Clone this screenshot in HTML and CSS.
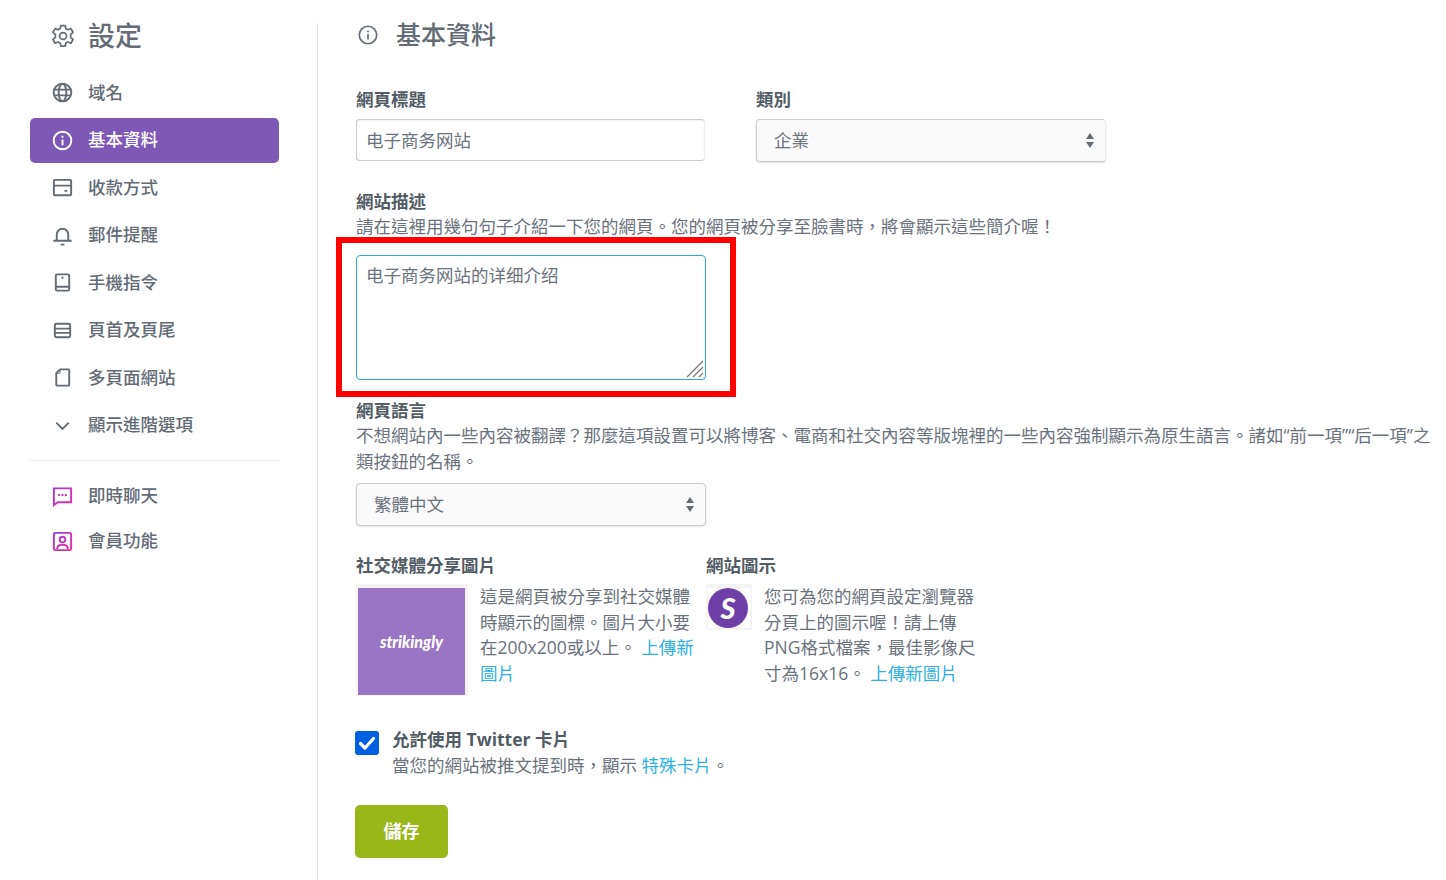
FILE: index.html
```html
<!DOCTYPE html>
<html lang="zh-Hant">
<head>
<meta charset="UTF-8" />
<title>設定</title>
<link rel="stylesheet" href="styles.css">
</head>
<body>
<svg class="defs" width="0" height="0" aria-hidden="true">
  <defs>
    <linearGradient id="pink" gradientUnits="userSpaceOnUse" x1="2" y1="2" x2="22" y2="22">
      <stop offset="0" stop-color="#9c3bd6"/>
      <stop offset="1" stop-color="#ea2f9a"/>
    </linearGradient>
  </defs>
</svg>
<div class="page">
  <aside class="sidebar">
    <h2 class="side-title">
      <svg class="icon" viewBox="1 1 22 22" fill="none" stroke="currentColor" stroke-width="1.600" stroke-linejoin="round"><path d="M10 2.500h4l.6 2.900 1.900.9 2.700-1.100 2 3.400-2.200 1.900v2.800l2.200 1.900-2 3.400-2.700-1.100-1.900.9-.6 2.900h-4l-.6-2.900-1.900-.9-2.700 1.100-2-3.400 2.200-1.900v-2.800L2.800 8.600l2-3.400 2.700 1.100 1.900-.9z"/><circle cx="12" cy="12" r="3.200"/></svg>
      <span>設定</span>
    </h2>
    <nav class="side-nav">
      <a class="side-item">
        <svg class="icon" viewBox="0 0 24 24" fill="none" stroke="currentColor" stroke-width="2"><circle cx="12" cy="12" r="9.200"/><ellipse cx="12" cy="12" rx="4" ry="9.200"/><path d="M3 9h18M3 15h18"/></svg>
        <span>域名</span>
      </a>
      <a class="side-item active">
        <svg class="icon" viewBox="0 0 24 24" fill="none" stroke="currentColor" stroke-width="2"><circle cx="12" cy="12" r="9.200"/><path d="M12 11v6M12 7v2"/></svg>
        <span>基本資料</span>
      </a>
      <a class="side-item">
        <svg class="icon" viewBox="0 0 24 24" fill="none" stroke="currentColor" stroke-width="2"><rect x="3" y="4" width="18" height="16" rx="1"/><path d="M3 10h18M14 15.500h3"/></svg>
        <span>收款方式</span>
      </a>
      <a class="side-item">
        <svg class="icon" viewBox="0 0 24 24" fill="none" stroke="currentColor" stroke-width="2"><path d="M6 17v-6a6 6 0 0 1 12 0v6M2.500 17.500h19M10 21.500h4"/></svg>
        <span>郵件提醒</span>
      </a>
      <a class="side-item">
        <svg class="icon" viewBox="0 0 24 24" fill="none" stroke="currentColor" stroke-width="2"><rect x="5" y="3.500" width="14" height="17" rx="1.500"/><path d="M5 16.500h14M11 7h2"/></svg>
        <span>手機指令</span>
      </a>
      <a class="side-item">
        <svg class="icon" viewBox="0 0 24 24" fill="none" stroke="currentColor" stroke-width="2"><rect x="4" y="5" width="16" height="14" rx="1.500"/><path d="M4 10h16M4 14.500h16"/></svg>
        <span>頁首及頁尾</span>
      </a>
      <a class="side-item">
        <svg class="icon" viewBox="0 0 24 24" fill="none" stroke="currentColor" stroke-width="2" stroke-linejoin="round"><path d="M9.500 3.500H18a1 1 0 0 1 1 1v15a1 1 0 0 1-1 1H6.500a1 1 0 0 1-1-1V7.500z"/><path d="M9.500 3.500v4h-4" stroke-width="1"/></svg>
        <span>多頁面網站</span>
      </a>
      <a class="side-item">
        <svg class="icon" viewBox="0 0 24 24" fill="none" stroke="currentColor" stroke-width="2"><path d="M5.500 9l6.500 6.500L18.500 9"/></svg>
        <span>顯示進階選項</span>
      </a>
    </nav>
    <hr class="side-rule">
    <nav class="side-nav extra">
      <a class="side-item">
        <svg class="icon" viewBox="0 0 24 24" fill="none" stroke="url(#pink)" stroke-width="2"><path d="M3 3.500h18v14.500H7l-4 3z"/><path d="M7.500 10.500h2M11 10.500h2M14.500 10.500h2"/></svg>
        <span>即時聊天</span>
      </a>
      <a class="side-item">
        <svg class="icon" viewBox="0 0 24 24" fill="none" stroke="url(#pink)" stroke-width="2"><rect x="3" y="3" width="18" height="18" rx="1.500"/><circle cx="12" cy="10" r="3"/><path d="M6.500 20v-1a4 4 0 0 1 4-3.500h3a4 4 0 0 1 4 3.500v1"/></svg>
        <span>會員功能</span>
      </a>
    </nav>
  </aside>

  <main class="content">
    <h2 class="content-title">
      <svg class="icon" viewBox="0 0 24 24" fill="none" stroke="currentColor" stroke-width="1.800"><circle cx="12" cy="12" r="9.500"/><path d="M12 11v6M12 7v2"/></svg>
      <span>基本資料</span>
    </h2>

    <div class="two-col">
      <div class="col">
        <label class="field-label">網頁標題</label>
        <input class="text-input" type="text" value="电子商务网站">
      </div>
      <div class="col">
        <label class="field-label">類別</label>
        <div class="select-wrap">
          <select class="select-input soft-right"><option>企業</option></select>
          <svg class="select-arrows" viewBox="0 0 8 15"><path d="M4 0l4 6H0zM0 9h8l-4 6z"/></svg>
        </div>
      </div>
    </div>

    <section class="desc-block">
      <label class="field-label">網站描述</label>
      <p class="hint">請在這裡用幾句句子介紹一下您的網頁。您的網頁被分享至臉書時，將會顯示這些簡介喔！</p>
      <div class="textarea-wrap">
        <textarea class="text-area">电子商务网站的详细介绍</textarea>
        <svg class="grip" viewBox="0 0 18 18" fill="none" stroke="#777" stroke-width="1.200"><path d="M1 17L17 1M7 17L17 7M13 17l4-4"/></svg>
        <div class="red-mark"></div>
      </div>
    </section>

    <section class="lang-block">
      <label class="field-label">網頁語言</label>
      <p class="hint">不想網站內一些內容被翻譯？那麼這項設置可以將博客、電商和社交內容等版塊裡的一些內容強制顯示為原生語言。諸如“前一項”“后一項”之類按鈕的名稱。</p>
      <div class="select-wrap lang-select">
        <select class="select-input"><option>繁體中文</option></select>
        <svg class="select-arrows" viewBox="0 0 8 15"><path d="M4 0l4 6H0zM0 9h8l-4 6z"/></svg>
      </div>
    </section>

    <section class="image-row">
      <div class="image-col share">
        <label class="field-label">社交媒體分享圖片</label>
        <div class="image-body">
          <div class="thumb big"><div class="share-pic">strikingly</div></div>
          <p class="image-text">這是網頁被分享到社交媒體時顯示的圖標。圖片大小要在200x200或以上。 <a>上傳新圖片</a></p>
        </div>
      </div>
      <div class="image-col fav">
        <label class="field-label">網站圖示</label>
        <div class="image-body">
          <div class="thumb small"><div class="fav-inner"><div class="fav-pic">S</div></div></div>
          <p class="image-text">您可為您的網頁設定瀏覽器分頁上的圖示喔！請上傳PNG格式檔案，最佳影像尺寸為16x16。 <a>上傳新圖片</a></p>
        </div>
      </div>
    </section>

    <section class="twitter-row">
      <span class="check">
        <svg viewBox="0 0 24 24" fill="none" stroke="#fff" stroke-width="3.200" stroke-linecap="round" stroke-linejoin="round"><path d="M5.500 12.500l4.500 4.500 8.500-9.500"/></svg>
      </span>
      <div>
        <div class="check-title">允許使用 Twitter 卡片</div>
        <div class="hint">當您的網站被推文提到時，顯示 <a>特殊卡片</a>。</div>
      </div>
    </section>

    <button class="save-btn" type="button">儲存</button>
  </main>
</div>
</body>
</html>
```

FILE: styles.css
```css
* {
  box-sizing: border-box;
}
html, body {
  margin: 0;
  padding: 0;
  height: 100%;
  background: #fff;
  color: #6a727b;
  font-family: 'Open Sans', 'Noto Sans CJK TC', sans-serif;
  font-size: 17.5px;
  line-height: 25.6px;
  overflow: hidden;
}
.defs {
  position: absolute;
}
a {
  color: #2ab1e6;
}

.page {
  display: flex;
  height: 880px;
}

/* Sidebar */
.sidebar {
  width: 318px;
  height: 857px;
  margin-top: 23px;
  padding-left: 30px;
  border-right: 1px solid #e3e4e5;
  flex-shrink: 0;
}
.side-title {
  display: flex;
  align-items: center;
  height: 26px;
  margin: 0 0 21px;
  padding-left: 21px;
  font-size: 27px;
  font-weight: 500;
  color: #636b75;
}
.side-title .icon {
  width: 24px;
  height: 24px;
  margin-right: 13px;
}
.side-nav {
  width: 249px;
  display: flex;
  flex-direction: column;
  gap: 2.500px;
}
.side-item {
  display: flex;
  align-items: center;
  height: 45px;
  padding-left: 21px;
  border-radius: 5px;
  color: #636b75;
  font-weight: 500;
}
.side-item .icon {
  width: 23px;
  height: 23px;
  margin-right: 14px;
  flex-shrink: 0;
}
.side-item.active {
  background: #7f57b5;
  color: #fff;
}
.side-rule {
  width: 250px;
  margin: 12px 0 13px;
  border: 0;
  border-top: 1px solid #ececec;
}
.side-nav.extra {
  gap: 0;
}

/* Main column */
.content {
  flex: 1;
  padding: 0 8px 0 38px;
}
.content-title {
  display: flex;
  align-items: center;
  height: 26px;
  margin: 22px 0 0;
  font-size: 25px;
  font-weight: 500;
  color: #636b75;
}
.content-title .icon {
  width: 22px;
  height: 22px;
  margin: 0 17px 0 1px;
}

.field-label {
  display: block;
  font-weight: 700;
  color: #525c64;
  line-height: 25px;
}
.hint {
  margin: 0;
}

.two-col {
  display: flex;
  gap: 50px;
  margin-top: 39px;
}
.col {
  width: 350px;
}
.text-input {
  display: block;
  width: 349px;
  height: 42px;
  margin-top: 7px;
  padding: 0 9px 2px;
  border: 1px solid #c9ccd0;
  border-right-color: #ececec;
  border-radius: 4px;
  box-shadow: inset 0 1px 2px rgba(0,0,0,0.05);
  color: #6a727b;
  font: inherit;
}
.select-wrap {
  position: relative;
  margin-top: 7px;
  width: 350px;
}
.select-input {
  display: block;
  width: 100%;
  height: 43px;
  padding: 0 17px;
  border: 1px solid #c9ccd0;
  border-radius: 4px;
  background: #fafafa;
  box-shadow: 0 1px 2px rgba(0,0,0,0.12);
  color: #6a727b;
  font: inherit;
  appearance: none;
}
.select-input.soft-right {
  border-right-color: #ececec;
}
.select-arrows {
  position: absolute;
  right: 12px;
  top: 12px;
  width: 8px;
  height: 19px;
  fill: #636b75;
  pointer-events: none;
}

.desc-block {
  margin-top: 27px;
}
.desc-block .hint {
  line-height: 25px;
}
.textarea-wrap {
  position: relative;
  width: 350px;
  margin-top: 16px;
}
.text-area {
  display: block;
  width: 350px;
  height: 125px;
  padding: 7px 9px;
  border: 1px solid #2ba9de;
  border-radius: 4px;
  outline: none;
  resize: none;
  color: #6a727b;
  font: inherit;
}
.grip {
  position: absolute;
  right: 2px;
  bottom: 2px;
  width: 18px;
  height: 18px;
}
.red-mark {
  position: absolute;
  left: -20px;
  top: -18px;
  width: 400px;
  height: 160px;
  border: 6px solid #ff0000;
  pointer-events: none;
}

.lang-block {
  margin-top: 18px;
}
.lang-block .field-label {
  line-height: 25px;
}
.lang-select {
  margin-top: 9px;
}

.image-row {
  display: flex;
  margin-top: 27px;
}
.image-col.share {
  width: 350px;
}
.image-body {
  display: flex;
  align-items: flex-start;
  margin-top: 6px;
}
.thumb {
  flex-shrink: 0;
  background: #f4f4f4;
}
.thumb.big {
  width: 112px;
  height: 112px;
  padding: 4px 3px 1px 2px;
  margin-right: 12px;
}
.thumb.small {
  width: 46px;
  height: 46px;
  padding: 4px 2px 2px;
  margin-right: 12px;
}
.fav-inner {
  height: 40px;
  background: #fff;
}
.share-pic {
  display: flex;
  align-items: center;
  justify-content: center;
  height: 100%;
  background: #9a75c4;
  color: #fff;
  font-family: 'Lato', sans-serif;
  font-size: 16px;
  font-weight: 900;
  font-style: italic;
}
.fav-pic {
  display: flex;
  align-items: center;
  justify-content: center;
  width: 40px;
  height: 40px;
  border-radius: 50%;
  background: #6f3fa8;
  color: #fff;
  font-family: 'Lato', sans-serif;
  font-size: 29px;
  font-weight: 900;
  font-style: italic;
}
.image-text {
  width: 218px;
  margin: 0;
}
.twitter-row {
  display: flex;
  gap: 13px;
  margin-top: 31px;
  margin-left: -1px;
}
.check {
  width: 24px;
  height: 24px;
  margin-top: 4px;
  border-radius: 3px;
  background: #0060df;
  flex-shrink: 0;
}
.check svg {
  display: block;
}
.check-title {
  font-weight: 700;
  color: #525c64;
}
.twitter-row .hint {
  line-height: 24.600px;
}
.save-btn {
  display: block;
  width: 93px;
  height: 53px;
  margin: 28px 0 0 -1px;
  padding-bottom: 2px;
  border: 0;
  border-radius: 5px;
  background: #99b719;
  color: #fff;
  font: inherit;
  font-weight: 700;
  font-size: 18px;
}
```
